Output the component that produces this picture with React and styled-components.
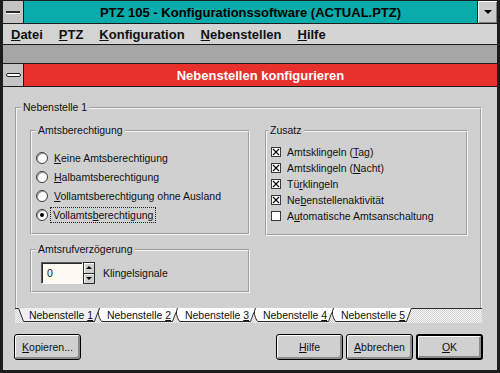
import React from 'react'
import styled, { createGlobalStyle } from 'styled-components'

const GlobalStyle = createGlobalStyle`
  html, body {
    margin: 0;
    padding: 0;
    background: #1c1c1c;
  }
  body {
    font-family: "Liberation Sans", Arial, sans-serif;
    color: #111;
  }
`

const Frame = styled.div`
  width: 500px;
  height: 373px;
  box-sizing: border-box;
  border: 3px solid #1c1c1c;
  border-top-width: 1px;
  background: #d0d0d0;
  display: flex;
  flex-direction: column;
  overflow: hidden;
`

const TitleRow = styled.div`
  flex: none;
  height: 22px;
  display: flex;
  border-bottom: 1px solid #1c1c1c;
`

const SysBox = styled.div`
  flex: none;
  width: 20px;
  background: #c4c4c4;
  border-right: 1px solid #1c1c1c;
  display: flex;
  align-items: center;
  justify-content: center;
`

const SysDash = styled.span`
  width: 14px;
  height: 2px;
  background: #2a2a2a;
  box-shadow: 0 1px 0 #fff;
`

const SysOval = styled.span`
  width: 13px;
  height: 2px;
  border: 1px solid #202020;
  border-radius: 3px;
  background: #fff;
`

const Caption = styled.div`
  flex: 1;
  background: ${p => p.$bg};
  color: ${p => p.$fg};
  font-weight: bold;
  font-size: 13px;
  display: flex;
  align-items: center;
  justify-content: center;
`

const ArrowButton = styled.div`
  flex: none;
  width: 19px;
  border-left: 1px solid #1c1c1c;
  background: #cccccc;
  box-shadow: inset 1px 1px 0 #fff, inset -1px -1px 0 #808080;
  display: flex;
  align-items: center;
  justify-content: center;
`

const ArrowGlyph = styled.span`
  width: 0;
  height: 0;
  border-left: 4px solid transparent;
  border-right: 4px solid transparent;
  border-top: 4px solid #000;
`

const MenuBar = styled.div`
  flex: none;
  height: 20px;
  background: #d4d4d4;
  border-bottom: 1px solid #1c1c1c;
  display: flex;
  align-items: center;
  font-weight: bold;
  font-size: 13px;
`

const MenuItem = styled.span`
  padding: 0 8px;
`

const Workspace = styled.div`
  flex: none;
  height: 18px;
  background: #a6a6a6;
  border-bottom: 1px solid #1c1c1c;
`

const ChildTitle = styled(TitleRow)`
  height: 22px;
`

const Body = styled.div`
  flex: 1;
  display: flex;
  flex-direction: column;
  padding: 14px 15px 0 12px;
  font-size: 10.5px;
`

const Group = styled.fieldset`
  margin: 0;
  min-width: 0;
  padding: ${p => p.$pad};
  border: 2px groove #f4f4f4;
  ${p => p.$open && 'border-bottom: none;'}
`

const Legend = styled.legend`
  font-size: 10.5px;
  line-height: 13px;
  padding: 0 2px;
  margin-left: ${p => p.$indent || 0}px;
`

const Columns = styled.div`
  display: grid;
  grid-template-columns: 220px 203px;
  column-gap: 15px;
  align-items: start;
`

const Column = styled.div`
  display: flex;
  flex-direction: column;
  gap: 8px;
`

const OptionRow = styled.div`
  height: ${p => p.$h}px;
  display: flex;
  align-items: center;
  gap: 6px;
`

const RadioDot = styled.span`
  flex: none;
  width: 12px;
  height: 12px;
  box-sizing: border-box;
  border-radius: 50%;
  border: 1px solid #3a3a3a;
  background: #fff;
  box-shadow: inset 1px 1px 0 #9a9a9a;
  display: flex;
  align-items: center;
  justify-content: center;
  &::after {
    content: '';
    width: 4px;
    height: 4px;
    border-radius: 50%;
    background: ${p => (p.$on ? '#000' : 'transparent')};
  }
`

const FocusText = styled.span`
  margin-left: -3px;
  padding: 1px 2px;
  outline: 1px dotted #222;
`

const CheckBox = styled.span`
  flex: none;
  width: 10px;
  height: 10px;
  box-sizing: border-box;
  border: 1px solid #3a3a3a;
  background: #fff;
  display: flex;
`

const SpinRow = styled.div`
  display: flex;
  align-items: center;
  gap: 8px;
`

const Spin = styled.div`
  display: flex;
  height: 22px;
`

const SpinField = styled.div`
  width: 42px;
  box-sizing: border-box;
  background: #fffaf2;
  border: 1px solid;
  border-color: #5a5a5a #fff #fff #5a5a5a;
  box-shadow: inset 1px 1px 0 #2a2a2a;
  display: flex;
  align-items: center;
  padding-left: 5px;
`

const SpinButtons = styled.div`
  width: 12px;
  display: flex;
  flex-direction: column;
`

const SpinButton = styled.div`
  flex: 1;
  background: #d0d0d0;
  border: 1px solid #2a2a2a;
  margin-top: ${p => (p.$down ? -1 : 0)}px;
  box-shadow: inset 1px 1px 0 #fff;
  display: flex;
  align-items: center;
  justify-content: center;
`

const Triangle = styled.span`
  width: 0;
  height: 0;
  border-left: 3px solid transparent;
  border-right: 3px solid transparent;
  ${p => (p.$up ? 'border-bottom: 3px solid #000;' : 'border-top: 3px solid #000;')}
`

const TabStrip = styled.div`
  flex: none;
  height: 14px;
  display: flex;
  padding-left: 3px;
  border-top: 1px solid #2a2a2a;
  background: repeating-conic-gradient(#f6f6f6 0 25%, #d2d2d2 0 50%) 0 0 / 2px 2px;
`

const Tab = styled.div`
  display: grid;
  width: 82px;
  height: 15px;
  margin-top: -1px;
  margin-left: ${p => (p.$first ? 0 : -4)}px;
  position: relative;
  z-index: ${p => (p.$active ? 2 : 1)};
  & > * {
    grid-area: 1 / 1;
  }
`

const TabShape = styled.svg`
  display: block;
  width: 82px;
  height: 15px;
`

const TabLabel = styled.span`
  line-height: 14px;
  text-align: center;
  padding-left: 4px;
`

const ButtonRow = styled.div`
  display: flex;
  align-items: center;
  gap: 3px;
  margin: 11px -1px 0 -1px;
`

const Spacer = styled.div`
  flex: 1;
`

const Button = styled.button`
  width: 67px;
  height: 26px;
  box-sizing: border-box;
  padding: 0;
  border: ${p => (p.$default ? 2 : 1)}px solid #000;
  border-radius: 3px;
  background: #d0d0d0;
  box-shadow: inset 1px 1px 0 #fff, inset -2px -2px 0 #8a8a8a;
  font: 10.5px "Liberation Sans", Arial, sans-serif;
  color: #111;
`

const Key = styled.u`
  text-decoration: underline;
  text-underline-offset: 1px;
`

const radios = [
  ['', 'K', 'eine Amtsberechtigung'],
  ['', 'H', 'albamtsberechtigung'],
  ['', 'V', 'ollamtsberechtigung ohne Ausland'],
  ['Vollamts', 'b', 'erechtigung', true],
]

const checks = [
  ['Amtsklingeln (', 'T', 'ag)', true],
  ['Amtsklingeln (', 'N', 'acht)', true],
  ['Tü', 'r', 'klingeln', true],
  ['Ne', 'b', 'enstellenaktivität', true],
  ['A', 'u', 'tomatische Amtsanschaltung', false],
]

const Label = ({ parts }) => (
  <span>
    {parts[0]}
    <Key>{parts[1]}</Key>
    {parts[2]}
  </span>
)

const TabItem = ({ n, active }) => (
  <Tab $first={n === 1} $active={active}>
    <TabShape viewBox="0 0 82 15">
      <polygon points="0,0 82,0 77,14 5,14" fill={active ? '#f0f0f0' : '#ffffff'} />
      {active ? (
        <polyline points="0.5,0 5.5,13.5 76.5,13.5 81.5,0" fill="none" stroke="#2a2a2a" />
      ) : (
        <path d="M3.5 0 Q0.5 6 5.5 13.5 L76.5 13.5 L81.5 0" fill="none" stroke="#2a2a2a" />
      )}
    </TabShape>
    <TabLabel>
      Nebenstelle <Key>{n}</Key>
    </TabLabel>
  </Tab>
)

const CheckMark = () => (
  <svg width="8" height="8" viewBox="0 0 8 8">
    <path d="M1 1 L7 7 M7 1 L1 7" stroke="#111" strokeWidth="1.3" />
  </svg>
)

export default function App() {
  return (
    <>
      <GlobalStyle />
      <Frame>
        <TitleRow>
          <SysBox>
            <SysDash />
          </SysBox>
          <Caption $bg="#0aabab" $fg="#000">
            PTZ 105 - Konfigurationssoftware (ACTUAL.PTZ)
          </Caption>
          <ArrowButton>
            <ArrowGlyph />
          </ArrowButton>
        </TitleRow>
        <MenuBar>
          <MenuItem><Key>D</Key>atei</MenuItem>
          <MenuItem><Key>P</Key>TZ</MenuItem>
          <MenuItem><Key>K</Key>onfiguration</MenuItem>
          <MenuItem><Key>N</Key>ebenstellen</MenuItem>
          <MenuItem><Key>H</Key>ilfe</MenuItem>
        </MenuBar>
        <Workspace />
        <ChildTitle>
          <SysBox>
            <SysOval />
          </SysBox>
          <Caption $bg="#e8302c" $fg="#fff">
            Nebenstellen konfigurieren
          </Caption>
        </ChildTitle>
        <Body>
          <Group $open $pad="10px 12px 15px 13px">
            <Legend $indent={-9}>Nebenstelle 1</Legend>
            <Columns>
              <Column>
                <Group $pad="11px 4px 9px">
                  <Legend $indent={0}>Amtsberechtigung</Legend>
                  {radios.map(r => (
                    <OptionRow key={r[2]} $h={19}>
                      <RadioDot $on={r[3]} />
                      {r[3] ? (
                        <FocusText>
                          <Label parts={r} />
                        </FocusText>
                      ) : (
                        <Label parts={r} />
                      )}
                    </OptionRow>
                  ))}
                </Group>
                <Group $pad="6px 9px 7px">
                  <Legend $indent={-5}>Amtsrufverzögerung</Legend>
                  <SpinRow>
                    <Spin>
                      <SpinField>0</SpinField>
                      <SpinButtons>
                        <SpinButton>
                          <Triangle $up />
                        </SpinButton>
                        <SpinButton $down>
                          <Triangle />
                        </SpinButton>
                      </SpinButtons>
                    </Spin>
                    <span>Klingelsignale</span>
                  </SpinRow>
                </Group>
              </Column>
              <Group $pad="7px 4px 10px">
                <Legend $indent={-3}>Zusatz</Legend>
                {checks.map(c => (
                  <OptionRow key={c[2]} $h={16}>
                    <CheckBox>{c[3] && <CheckMark />}</CheckBox>
                    <Label parts={c} />
                  </OptionRow>
                ))}
              </Group>
            </Columns>
          </Group>
          <TabStrip>
            {[1, 2, 3, 4, 5].map(n => (
              <TabItem key={n} n={n} active={n === 1} />
            ))}
          </TabStrip>
          <ButtonRow>
            <Button><Key>K</Key>opieren...</Button>
            <Spacer />
            <Button><Key>H</Key>ilfe</Button>
            <Button><Key>A</Key>bbrechen</Button>
            <Button $default><Key>O</Key>K</Button>
          </ButtonRow>
        </Body>
      </Frame>
    </>
  )
}
